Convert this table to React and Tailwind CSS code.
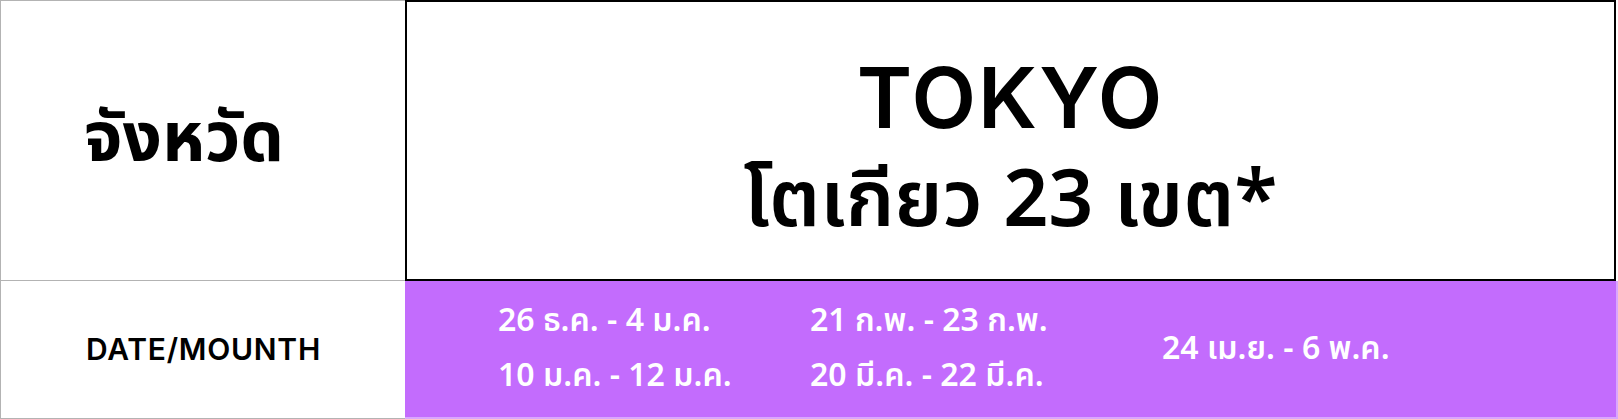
import React from "react";

const dates = [
  ["26 ธ.ค. - 4 ม.ค.", "10 ม.ค. - 12 ม.ค."],
  ["21 ก.พ. - 23 ก.พ.", "20 มี.ค. - 22 มี.ค."],
  ["24 เม.ย. - 6 พ.ค."],
];

const App = () => {
  return (
    <div className="w-[1618px] h-[419px] bg-white font-['Noto_Sans_Thai','Noto_Sans','Inter',sans-serif]">
      <div className="grid grid-cols-[405px_1fr] grid-rows-[281px_138px] h-full">
        {/* province label */}
        <div className="flex items-center border-l border-t border-b border-[#b3b3b3] pl-[83px]">
          <h2 className="font-bold text-[69px] text-black leading-none">จังหวัด</h2>
        </div>

        {/* province name */}
        <div className="flex flex-col justify-center items-center border-2 border-black mr-[2px] pt-[18px]">
          <p className="font-['Inter','Noto_Sans_Thai',sans-serif] font-semibold text-[84px] text-black leading-[104px] tracking-[2px]">
            TOKYO
          </p>
          <p className="font-semibold text-[79px] text-black leading-[104px]">
            โตเกียว 23 เขต*
          </p>
        </div>

        {/* dates label */}
        <div className="flex items-center border-l border-b border-[#b3b3b3] pl-[85px]">
          <span className="font-['Inter','Noto_Sans',sans-serif] font-semibold text-[30px] text-black tracking-wide">
            DATE/MOUNTH
          </span>
        </div>

        {/* dates */}
        <div className="flex items-center bg-[#c36cfd] border-r-2 border-b-2 border-[#d9a6fd] pl-[93px]">
          <div className="flex flex-col gap-[20px] w-[312px]">
            {dates[0].map((d) => (
              <span key={d} className="font-semibold text-[32px] text-white leading-[35px]">{d}</span>
            ))}
          </div>
          <div className="flex flex-col gap-[20px] w-[352px]">
            {dates[1].map((d) => (
              <span key={d} className="font-semibold text-[32px] text-white leading-[35px]">{d}</span>
            ))}
          </div>
          <div className="flex flex-col">
            {dates[2].map((d) => (
              <span key={d} className="font-semibold text-[32px] text-white leading-[35px]">{d}</span>
            ))}
          </div>
        </div>
      </div>
    </div>
  );
};

export default App;
